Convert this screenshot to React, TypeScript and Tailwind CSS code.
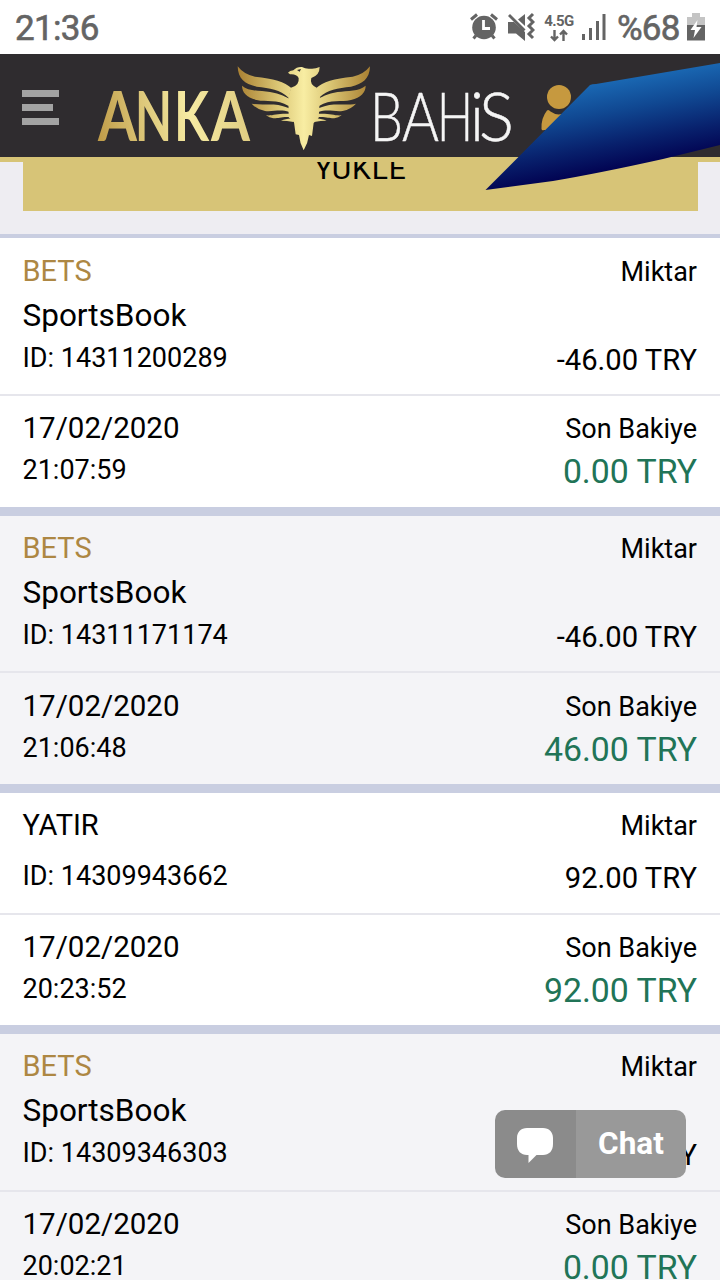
import clsx from 'clsx'

type Transaction = {
  id: string
  type: string
  product?: string
  amount: string
  date: string
  time: string
  balance: string
  topBox: string
  bottomBox: string
}

const transactions: Transaction[] = [
  {
    id: '14311200289',
    type: 'BETS',
    product: 'SportsBook',
    amount: '-46.00 TRY',
    date: '17/02/2020',
    time: '21:07:59',
    balance: '0.00 TRY',
    topBox: 'h-[156px] pt-[13px] pb-[15px]',
    bottomBox: 'h-[111px] pt-[11px]',
  },
  {
    id: '14311171174',
    type: 'BETS',
    product: 'SportsBook',
    amount: '-46.00 TRY',
    date: '17/02/2020',
    time: '21:06:48',
    balance: '46.00 TRY',
    topBox: 'h-[155px] pt-[12px] pb-[15px]',
    bottomBox: 'h-[111px] pt-[12px]',
  },
  {
    id: '14309943662',
    type: 'YATIR',
    amount: '92.00 TRY',
    date: '17/02/2020',
    time: '20:23:52',
    balance: '92.00 TRY',
    topBox: 'h-[120px] pt-[12px] pb-[16px]',
    bottomBox: 'h-[110px] pt-[11px]',
  },
  {
    id: '14309346303',
    type: 'BETS',
    product: 'SportsBook',
    amount: '-46.00 TRY',
    date: '17/02/2020',
    time: '20:02:21',
    balance: '0.00 TRY',
    topBox: 'h-[156px] pt-[12px] pb-[16px]',
    bottomBox: 'h-[111px] pt-[11px]',
  },
]

// [letter, x, width]
const ankaLetters: [string, number, number][] = [
  ['A', 98, 39],
  ['N', 135, 37],
  ['K', 174, 35],
  ['A', 211, 39],
]

const bahisLetters: [string, number, number][] = [
  ['B', 370, 33],
  ['A', 402, 37],
  ['H', 437, 36],
  ['i', 470, 14],
  ['S', 479, 35],
]

function AlarmIcon() {
  return (
    <svg className="w-[30px] h-[30px]" viewBox="0 0 30 30" fill="none">
      <path d="M2 7.500 8 2.500M28 7.500 22 2.500" stroke="#646464" strokeWidth="3" />
      <path d="M7 23.500 4.500 26.500M23 23.500 25.500 26.500" stroke="#646464" strokeWidth="3" />
      <circle cx="15" cy="15.500" r="11.800" fill="#646464" />
      <path d="M14.500 8v8.500H21" stroke="#fff" strokeWidth="2.800" />
    </svg>
  )
}

function MuteVibrateIcon() {
  return (
    <svg className="w-[28px] h-[30px]" viewBox="0 0 28 30" fill="none">
      <path d="M1 10h6l11 10v9l-9-7.500H1z" fill="#646464" />
      <path d="M11 7.500 18 2v12z" fill="#646464" />
      <path d="M2 3 17.500 18.500" stroke="#646464" strokeWidth="2.800" />
      <path d="M26 2l-4 4 4 4-4 4 4 4-4 4 4 4" stroke="#646464" strokeWidth="3" />
    </svg>
  )
}

function StatusBar() {
  return (
    <div className="h-[54px] bg-white flex items-center justify-between pl-[15px] pr-[14px] text-[#646464]">
      <span className="pt-[3px] text-[35px] leading-[54px] tracking-[-0.7px] [-webkit-text-stroke:0.6px_#646464]">21:36</span>
      <div className="flex items-center">
        <AlarmIcon />
        <div className="w-[8px]" />
        <MuteVibrateIcon />
        <div className="ml-[8px] w-[32px] flex flex-col items-center">
          <span className="text-[15px] leading-[16px] font-bold tracking-[-0.6px]">4.5G</span>
          <svg className="w-[18px] h-[13px]" viewBox="0 0 18 13" fill="none" stroke="#646464" strokeWidth="2.400">
            <path d="M4.500 1v9.500M1 7.500l3.500 3.500L8 7.500M13.500 12V2.500M10 5.500 13.500 2 17 5.500" />
          </svg>
        </div>
        <svg className="ml-[6px] w-[26px] h-[28px]" viewBox="0 0 26 28" fill="#646464">
          <rect x="1" y="21" width="3" height="6" />
          <rect x="8" y="15" width="3" height="12" />
          <rect x="15" y="8" width="3" height="19" />
          <rect x="21.500" y="1" width="3" height="26" />
        </svg>
        <span className="ml-[10px] w-[66px] pt-[3px] text-[35px] leading-[54px] tracking-[-0.800px] [-webkit-text-stroke:0.6px_#646464]">%68</span>
        <svg className="ml-[3px] w-[20px] h-[28px]" viewBox="0 0 20 28">
          <path d="M6 0h8v4h5v9H1V4h5z" fill="#c4c4c4" />
          <path d="M1 12h18v15.500H1z" fill="#646464" />
          <path d="M11.500 7 4.500 17h4.500L7.500 25 15.500 14h-5z" fill="#fff" />
        </svg>
      </div>
    </div>
  )
}

function Feathers() {
  return (
    <>
      <path d="M53 37Q72 62 105 68C160 73 195 84 214 102L206 131C180 106 150 103 110 98C75 90 54 75 53 37Z" />
      <path d="M66 95C85 112 120 110 150 114C180 119 200 130 214 138L206 156C170 134 140 145 110 138C80 130 66 115 66 95Z" />
      <path d="M95 149C120 154 150 149 175 153Q200 158 212 166L208 174C180 164 160 174 135 171Q110 166 95 149Z" />
      <path d="M138 184C160 186 175 177 212 180L214 190C185 187 175 194 160 193Q148 191 138 184Z" />
      <path d="M183 200C195 197 202 193 218 194L221 204Q200 200 183 200Z" />
    </>
  )
}

function Logo() {
  return (
    <svg className="w-[420px] h-[103px]" viewBox="96 54 420 103">
      <defs>
        <linearGradient id="anka" gradientUnits="userSpaceOnUse" x1="98" x2="250" y1="130" y2="105">
          <stop offset="0" stopColor="#c09d4a" />
          <stop offset="0.300" stopColor="#dcc678" />
          <stop offset="0.600" stopColor="#f6eba3" />
          <stop offset="1" stopColor="#dfcb80" />
        </linearGradient>
        <linearGradient id="bird" gradientUnits="userSpaceOnUse" x1="53" x2="450" y1="0" y2="0">
          <stop offset="0" stopColor="#a98032" />
          <stop offset="0.300" stopColor="#dac573" />
          <stop offset="0.500" stopColor="#f8eda3" />
          <stop offset="0.700" stopColor="#dac573" />
          <stop offset="1" stopColor="#a98032" />
        </linearGradient>
      </defs>
      <g fill="url(#anka)" fontFamily="Lato" fontWeight="700" fontSize="68">
        {ankaLetters.map(([letter, x, width]) => (
          <text key={x} x={x} y="141" textLength={width} lengthAdjust="spacingAndGlyphs">
            {letter}
          </text>
        ))}
      </g>
      <g transform="translate(220 54) scale(0.3333)" fill="url(#bird)">
        <Feathers />
        {/* right wing is the left one mirrored around the body */}
        <g transform="translate(503 0) scale(-1 1)">
          <Feathers />
        </g>
        <path d="M204 56Q209 50 220 49Q230 38 246 39Q256 45 270 44Q284 46 299 39Q299 64 274 72Q268 91 290 101L300 130L296 192L281 207L276 246L267 243Q264 267 251 289Q239 266 237 243L227 241L222 205L206 190L205 130L213 101Q239 95 236 72Q229 59 210 61Z" />
        <path d="M231 48l12-3-4 8z" fill="#2f2c2f" />
      </g>
      <g fill="#f5f5f5" stroke="#f5f5f5" strokeWidth="0.500" fontFamily="Lato" fontWeight="300" fontSize="67">
        {bahisLetters.map(([letter, x, width]) => (
          <text key={x} x={x} y="141" textLength={width} lengthAdjust="spacingAndGlyphs">
            {letter}
          </text>
        ))}
      </g>
    </svg>
  )
}

function Header() {
  return (
    <header className="relative z-10 h-[108px] bg-[#2f2c2f] border-b-[5px] border-[#d7c477] flex items-start">
      <div className="ml-[22px] mt-[36px] w-[37px] flex flex-col gap-[7px]">
        <div className="h-[7px] w-[37px] bg-[#a3a3a3]" />
        <div className="h-[7px] w-[31px] bg-[#a3a3a3]" />
        <div className="h-[7px] w-[37px] bg-[#a3a3a3]" />
      </div>
      <div className="ml-[37px]">
        <Logo />
      </div>
      <svg className="ml-[24px] mt-[30px] w-[40px] h-[50px]" viewBox="540 84 40 50" fill="#c6993f">
        <circle cx="559" cy="97" r="12" />
        <path d="M541.500 129Q541 118 547 110.500Q548.500 109 550.500 111.500Q558 117 567 112L577 125L577 130H544Q542 131 541.500 129Z" />
      </svg>
      <svg className="absolute right-0 top-0 w-[240px] h-[140px]" viewBox="480 54 240 140">
        <defs>
          <linearGradient id="ribbon" gradientUnits="userSpaceOnUse" x1="600" y1="80" x2="617" y2="172">
            <stop offset="0" stopColor="#1b6bb6" />
            <stop offset="0.350" stopColor="#104892" />
            <stop offset="0.700" stopColor="#08206c" />
            <stop offset="1" stopColor="#01004f" />
          </linearGradient>
        </defs>
        <path d="M485.500 190 590 85Q592 84 596 84L720 63V145L663 159Q600 173 553 181Z" fill="url(#ribbon)" />
      </svg>
    </header>
  )
}

function TransactionCard({ item, shaded }: { item: Transaction; shaded: boolean }) {
  return (
    <div className={clsx('border-b-[9px] border-[#c9cee1]', shaded ? 'bg-[#f4f4f7]' : 'bg-white')}>
      <div className={clsx('flex justify-between pl-[22.5px] pr-[23px]', item.topBox)}>
        <div>
          <p className={clsx('text-[29px] leading-[40px]', item.product ? 'text-[#ad8743]' : 'text-black')}>
            {item.type}
          </p>
          {item.product && <p className="text-[31.5px] leading-[50px] -mb-[2px]">{item.product}</p>}
          <p className={clsx('text-[27px] leading-[38px]', !item.product && 'mt-[12px]')}>ID: {item.id}</p>
        </div>
        <div className="flex flex-col justify-between text-right">
          <p className="text-[27px] leading-[43px]">Miktar</p>
          <p className="text-[29.2px] leading-[38px]">{item.amount}</p>
        </div>
      </div>
      <div className="border-t-2 border-[#e6e6ec]">
        <div className={clsx('flex justify-between pl-[22.5px] pr-[23px]', item.bottomBox)}>
          <div>
            <p className="text-[29.5px] leading-[42px]">{item.date}</p>
            <p className="text-[27px] leading-[42px]">{item.time}</p>
          </div>
          <div className="text-right">
            <p className="text-[27px] leading-[44px]">Son Bakiye</p>
            <p className="text-[33.8px] leading-[41px] text-[#217457]">{item.balance}</p>
          </div>
        </div>
      </div>
    </div>
  )
}

function ChatButton() {
  return (
    <button className="absolute z-20 left-[495px] top-[1110px] w-[191px] h-[68px] rounded-[10px] overflow-hidden flex">
      <span className="w-[81px] h-full bg-[#8b8b8b] flex items-center justify-center">
        <svg className="mt-[2px] mr-[2px] w-[36px] h-[36px]" viewBox="0 0 36 36" fill="#fff">
          <path d="M10 1H26C32 1 36 5 36 11V17C36 24 32 28 26 28H19.500L11.500 36V28H10C4 28 0 24 0 17V11C0 5 4 1 10 1Z" />
        </svg>
      </span>
      <span className="flex-1 h-full bg-[#999] text-white text-[31.5px] leading-[68px] font-bold text-center">Chat</span>
    </button>
  )
}

export default function App() {
  return (
    <div className="relative w-[720px] h-[1280px] overflow-hidden bg-white text-black font-[Roboto,sans-serif]">
      <StatusBar />
      <Header />
      <div className="h-[76px] bg-[#eeedf2] border-b-4 border-[#c9cee1] overflow-hidden">
        <div className="ml-[23px] mr-[22px] h-[49px] bg-[#d7c477] text-center text-[30px] leading-[14px] tracking-[0.8px]">
          YÜKLE
        </div>
      </div>
      {transactions.map((item, index) => (
        <TransactionCard key={item.id} item={item} shaded={index % 2 === 1} />
      ))}
      <ChatButton />
    </div>
  )
}
